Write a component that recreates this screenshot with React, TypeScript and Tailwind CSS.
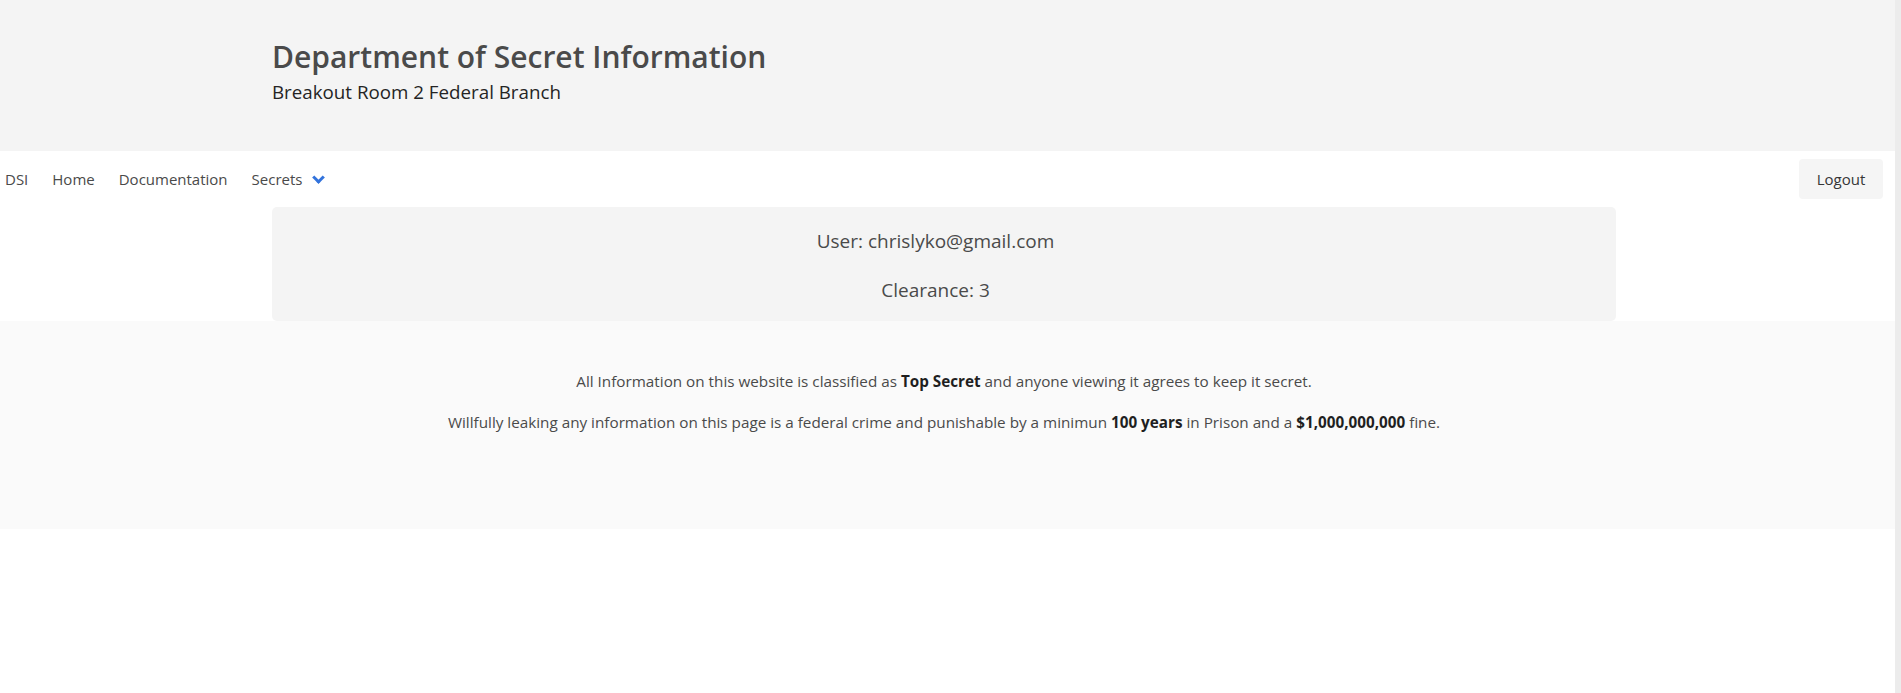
import React from "react";

const font = { fontFamily: '"Open Sans", "Noto Sans", sans-serif' };

const Navbar: React.FC = () => {
    return (
        <nav className="h-[56px] flex items-center justify-between bg-white text-[15px] leading-[24px] text-[#4a4a4a]">
            <div className="flex items-center">
                <a className="pl-[5px] pr-3" href="#">DSI</a>
                <a className="px-3" href="#">Home</a>
                <a className="px-3" href="#">Documentation</a>
                <div className="flex items-center px-3">
                    <span>Secrets</span>
                    <span className="ml-[12px] mb-[4px] w-[9px] h-[9px] border-l-[3px] border-b-[3px] border-[#3273dc] -rotate-45"></span>
                </div>
            </div>
            <div className="pr-3">
                <button className="h-[40px] w-[84px] rounded-[4px] bg-[#f5f5f5] text-[#363636]">Logout</button>
            </div>
        </nav>
    );
};

export default function App() {
    return (
        <div className="flex min-h-[693px] bg-white" style={font}>
            <div className="w-[1895px]">
                {/* Hero */}
                <section className="h-[151px] bg-[#f4f4f4] pl-[272px] pt-[39px]">
                    <h1 className="text-[30px] leading-[36px] font-semibold text-[#4a4a4a] mb-[5px]">Department of Secret Information</h1>
                    <h2 className="text-[18.75px] leading-[24px] text-[#242424]">Breakout Room 2 Federal Branch</h2>
                </section>

                <Navbar />

                {/* User info */}
                <div className="pl-[272px]">
                    <div className="w-[1344px] h-[114px] rounded-[5px] bg-[#f4f4f4] pt-[20px] pr-[17px] text-center text-[19px] leading-[28px] text-[#4a4a4a]">
                        <p className="mb-[21px]">User: chrislyko@gmail.com</p>
                        <p>Clearance: 3</p>
                    </div>
                </div>

                {/* Footer */}
                <footer className="h-[208px] bg-[#fafafa] pt-[48px] text-[15.25px] leading-[24px] text-[#4a4a4a]">
                    <div className="w-[1888px] text-center">
                        <p className="mb-[17px]">All Information on this website is classified as <strong className="font-bold text-[#1f1f1f]">Top Secret</strong> and anyone viewing it agrees to keep it secret.</p>
                        <p>Willfully leaking any information on this page is a federal crime and punishable by a minimun <strong className="font-bold text-[#1f1f1f]">100 years</strong> in Prison and a <strong className="font-bold text-[#1f1f1f]">$1,000,000,000</strong> fine.</p>
                    </div>
                </footer>
            </div>
            <div className="w-[6px] bg-[#ececec]"></div>
        </div>
    );
}
